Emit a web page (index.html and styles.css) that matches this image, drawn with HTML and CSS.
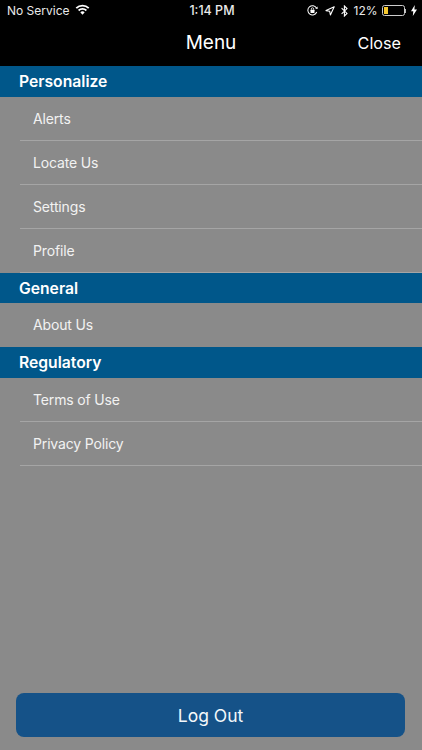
FILE: index.html
```html
<!DOCTYPE html>
<html lang="en">
<head>
<meta charset="utf-8">
<title>Menu</title>
<link rel="stylesheet" href="styles.css">
</head>
<body>
<div class="phone">
  <header class="top">
    <div class="status">
      <div class="status-left">
        <span>No Service</span>
        <svg class="wifi" viewBox="0 0 16 12" width="15" height="11"><path fill="#fff" d="M8 11.6 5.6 9a3.4 3.4 0 0 1 4.8 0zM4.4 7.8 3.1 6.4a7 7 0 0 1 9.8 0l-1.3 1.4a5.1 5.1 0 0 0-7.2 0zM1.9 5.2.5 3.8a10.6 10.6 0 0 1 15 0l-1.4 1.4a8.7 8.7 0 0 0-12.2 0z"/></svg>
      </div>
      <div class="status-time">1:14 PM</div>
      <div class="status-right">
        <svg class="lock" viewBox="0 0 12 12" width="11" height="11"><path fill="none" stroke="#fff" stroke-width="1.1" d="M10.6 7.6A5 5 0 1 1 10.4 3.6"/><path fill="#fff" d="M9 3.9 11.6 4.4 11.5 1.6z"/><rect x="3.8" y="5.2" width="4.4" height="3.4" rx=".5" fill="#fff"/><path fill="none" stroke="#fff" stroke-width=".9" d="M4.7 5.2V4.3a1.3 1.3 0 0 1 2.6 0v.9"/></svg>
        <svg class="arrow" viewBox="0 0 10 10" width="10" height="10"><path fill="none" stroke="#fff" stroke-width="1.1" stroke-linejoin="round" d="M9.2.8 1 4.6l3.7.7.7 3.7z"/></svg>
        <svg class="bt" viewBox="0 0 7 12" width="7" height="12"><path fill="none" stroke="#fff" stroke-width="1.1" d="M.6 3.2 6 8.4 3.4 11V1L6 3.6.6 8.8"/></svg>
        <span class="pct">12%</span>
        <div class="battery"><div class="level"></div></div>
        <div class="nub"></div>
        <svg class="bolt" viewBox="0 0 6 11" width="6" height="11"><path fill="#fff" d="M3.8 0 0 6.3h2.3L1.8 11 6 4.5H3.4z"/></svg>
      </div>
    </div>
    <div class="nav">
      <h1 class="title">Menu</h1>
      <span class="close">Close</span>
    </div>
  </header>
  <main class="content">
    <nav class="menu">
      <h2 class="section">Personalize</h2>
      <ul class="rows">
        <li class="row">Alerts</li>
        <li class="row">Locate Us</li>
        <li class="row">Settings</li>
        <li class="row">Profile</li>
      </ul>
      <h2 class="section">General</h2>
      <ul class="rows">
        <li class="row plain">About Us</li>
      </ul>
      <h2 class="section">Regulatory</h2>
      <ul class="rows">
        <li class="row">Terms of Use</li>
        <li class="row">Privacy Policy</li>
      </ul>
    </nav>
    <div class="footer">
      <button class="logout" type="button">Log Out</button>
    </div>
  </main>
</div>
</body>
</html>
```
FILE: styles.css
```css
* { box-sizing: border-box; }
html, body { margin: 0; padding: 0; }
body { width: 422px; height: 750px; overflow: hidden; font-family: Inter, Roboto, "Liberation Sans", sans-serif; color: #fff; }
.phone { width: 422px; height: 750px; display: flex; flex-direction: column; background: #8a8a8a; }
.top { height: 66px; background: #000; flex: none; }
.status { height: 21px; display: grid; grid-template-columns: 1fr auto 1fr; align-items: center; padding: 0 5px 0 7px; font-size: 12px; color: #eaeaea; }
.status-left { display: flex; align-items: center; gap: 5px; }
.wifi { margin-top: -2px; }
.status-time { font-weight: 500; font-size: 12.5px; text-align: center; }
.status-right { display: flex; align-items: center; justify-content: flex-end; }
.lock { margin-right: 7px; }
.arrow { margin-right: 6px; }
.bt { margin-right: 6px; }
.pct { margin-right: 4px; }
.battery { width: 23px; height: 11px; border: 1px solid #ccc; border-radius: 2.5px; padding: 1px; }
.level { width: 4px; height: 100%; background: #f7c92f; }
.nub { width: 1.5px; height: 4px; background: #bbb; margin-right: 5px; }
.nav { height: 45px; display: flex; align-items: center; justify-content: center; position: relative; }
.title { margin: 0 0 1px; font-size: 19px; font-weight: 400; line-height: 38px; }
.close { position: absolute; right: 21px; top: 3px; font-size: 16.2px; line-height: 38px; }
.content { flex: 1; display: flex; flex-direction: column; justify-content: space-between; }
.section { margin: 0; height: 30.5px; padding-left: 19px; background: #00578a; font-size: 15.7px; font-weight: 600; line-height: 31.5px; }
.rows { margin: 0; padding: 0; list-style: none; }
.row { height: 44px; margin-left: 20px; padding-left: 13px; font-size: 14px; letter-spacing: -.15px; line-height: 43px; color: #f2f2f2; border-bottom: 1px solid #a5a5a5; }
.row.plain { border-bottom: 0; }
.footer { padding: 0 17px 13px 16px; }
.logout { display: block; width: 100%; height: 44px; border: 0; border-radius: 8px; background: #155288; color: #f4f8fb; font-family: inherit; font-size: 17.5px; }
```
